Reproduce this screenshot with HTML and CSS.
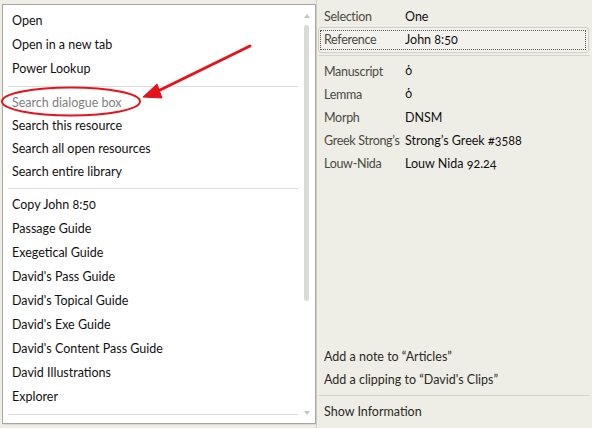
FILE: index.html
```html
<!DOCTYPE html>
<html>
<head>
<meta charset="utf-8">
<link rel="stylesheet" href="styles.css">
</head>
<body>
<div class="page">
  <div class="menu-panel">
    <ul class="menu">
      <li class="item">Open</li>
      <li class="item">Open in a new tab</li>
      <li class="item">Power Lookup</li>
      <li class="sep"></li>
      <li class="item short disabled">Search dialogue box</li>
      <li class="item short">Search this resource</li>
      <li class="item short">Search all open resources</li>
      <li class="item short">Search entire library</li>
      <li class="sep"></li>
      <li class="item">Copy John 8:50</li>
      <li class="item">Passage Guide</li>
      <li class="item">Exegetical Guide</li>
      <li class="item">David's Pass Guide</li>
      <li class="item">David's Topical Guide</li>
      <li class="item">David's Exe Guide</li>
      <li class="item">David's Content Pass Guide</li>
      <li class="item">David Illustrations</li>
      <li class="item">Explorer</li>
      <li class="sep"></li>
    </ul>
    <div class="scrollbar">
      <svg class="arrow" width="6" height="4" viewBox="0 0 6 4"><path d="M0 4 L3 0 L6 4 Z" fill="#c4c4c0"/></svg>
      <div class="thumb"></div>
      <svg class="arrow down" width="6" height="4" viewBox="0 0 6 4"><path d="M0 0 L3 4 L6 0 Z" fill="#c4c4c0"/></svg>
    </div>
  </div>
  <div class="info-panel">
    <div class="row first"><span class="label">Selection</span><span class="value">One</span></div>
    <div class="focus-wrap">
      <div class="row focus"><span class="label">Reference</span><span class="value">John 8:50</span></div>
    </div>
    <div class="rsep"></div>
    <div class="row"><span class="label">Manuscript</span><span class="value greek">ὁ</span></div>
    <div class="row"><span class="label">Lemma</span><span class="value greek">ὁ</span></div>
    <div class="row"><span class="label">Morph</span><span class="value">DNSM</span></div>
    <div class="row"><span class="label">Greek Strong’s</span><span class="value">Strong’s Greek #3588</span></div>
    <div class="row"><span class="label">Louw-Nida</span><span class="value">Louw Nida 92.24</span></div>
    <div class="bottom">
      <div class="row action">Add a note to “Articles”</div>
      <div class="row action">Add a clipping to “David's Clips”</div>
      <div class="rsep"></div>
      <div class="row action">Show Information</div>
    </div>
  </div>
  <svg class="annotation" width="592" height="428" viewBox="0 0 592 428">
    <ellipse cx="71" cy="101.5" rx="69" ry="14" fill="none" stroke="#e5141c" stroke-width="2"/>
    <line x1="250" y1="46" x2="156" y2="92" stroke="#e5141c" stroke-width="3" stroke-linecap="round"/>
    <path d="M143 97 L157 84 L162 98 Z" fill="#e5141c" stroke="#e5141c" stroke-width="1" stroke-linejoin="round"/>
  </svg>
</div>
</body>
</html>
```
FILE: styles.css
```css
html, body {
  margin: 0;
  padding: 0;
}
body {
  background: #efeee6;
  font-family: Lato, "Open Sans", "Noto Sans", sans-serif;
  font-size: 12.5px;
  font-feature-settings: "onum" 1;
  color: #111;
}
.page {
  position: relative;
  width: 592px;
  height: 428px;
  display: flex;
  overflow: hidden;
}
.menu-panel {
  margin: 4px 0 0 2px;
  width: 312px;
  height: 418px;
  border: 1px solid #a9a8a0;
  background: #fff;
  display: flex;
  box-shadow: 1px 1px 0 #dcdbd3;
}
.menu {
  list-style: none;
  margin: 0;
  padding: 4px 0 0 0;
  width: 295px;
}
.item {
  height: 24px;
  line-height: 24px;
  padding-left: 9px;
  white-space: nowrap;
}
.item.short {
  height: 23px;
  line-height: 23px;
}
.item.disabled {
  color: #7e7e7e;
}
.sep {
  height: 1px;
  margin: 5px 0 4px 5px;
  background: #dddcd6;
}
.scrollbar {
  flex: 1;
  display: flex;
  flex-direction: column;
  align-items: center;
  padding: 9px 0 8px 0;
}
.arrow {
  display: block;
  flex: none;
}
.thumb {
  margin-top: 7px;
  width: 5px;
  height: 276px;
  border-radius: 3px;
  background: #dadad6;
}
.arrow.down {
  margin-top: auto;
}
.info-panel {
  flex: 1;
  display: flex;
  flex-direction: column;
  padding: 6px 0 5px 1px;
  border-left: 1px solid #cfcec6;
}
.row {
  display: flex;
  height: 23px;
  line-height: 23px;
  padding-left: 6px;
  white-space: nowrap;
}
.row.first {
  height: 21px;
  line-height: 21px;
}
.label {
  width: 81px;
  flex: none;
  color: #4a4a42;
  letter-spacing: -0.3px;
}
.value {
  color: #111;
}
.greek {
  font-family: "DejaVu Sans", sans-serif;
  font-size: 12px;
}
.focus-wrap {
  margin: 0 3px 0 0;
  border: 1px solid #cfcec6;
  border-radius: 3px;
  background: #f3f2ec;
}
.row.focus {
  margin: 2px 2px 2px 1px;
  height: 18px;
  line-height: 18px;
  padding-left: 3px;
  border: 1px dotted #555;
}
.rsep {
  height: 1px;
  margin: 2px 2px 4px 0;
  background: #d6d5cd;
  border-radius: 1px;
}
.bottom {
  margin-top: auto;
  display: flex;
  flex-direction: column;
}
.bottom .rsep {
  margin: 4px 2px 4px 0;
}
.action {
  color: #2a2a24;
}
.annotation {
  position: absolute;
  left: 0;
  top: 0;
  pointer-events: none;
}
```
